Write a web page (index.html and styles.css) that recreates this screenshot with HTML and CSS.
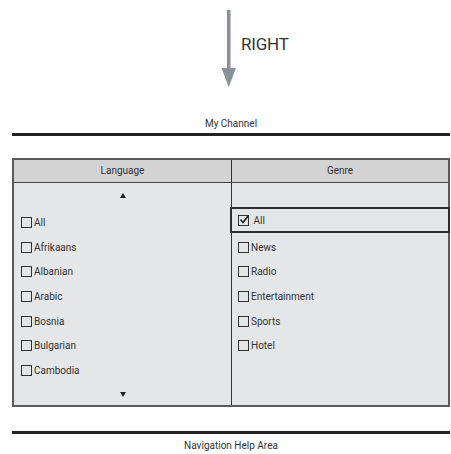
FILE: index.html
```html
<!DOCTYPE html>
<html>
<head>
<meta charset="utf-8">
<link rel="stylesheet" href="styles.css">
</head>
<body>
<div class="top">
  <svg class="arrow" width="16" height="90" viewBox="0 0 16 90">
    <rect x="6" y="10" width="3.5" height="60" fill="#8b909b"/>
    <polygon points="0.5,68 15,68 7.75,87" fill="#8b909b"/>
  </svg>
  <span class="dir">RIGHT</span>
</div>
<div class="wrap">
  <div class="title">My Channel</div>
  <div class="rule"></div>
  <div class="table">
    <div class="head">Language</div>
    <div class="head right">Genre</div>
    <div class="col">
      <div class="row center"><svg width="6" height="5" viewBox="0 0 6 5"><polygon points="3,0 6,5 0,5" fill="#222"/></svg></div>
      <div class="row"><span class="cb"></span>All</div>
      <div class="row"><span class="cb"></span>Afrikaans</div>
      <div class="row"><span class="cb"></span>Albanian</div>
      <div class="row"><span class="cb"></span>Arabic</div>
      <div class="row"><span class="cb"></span>Bosnia</div>
      <div class="row"><span class="cb"></span>Bulgarian</div>
      <div class="row"><span class="cb"></span>Cambodia</div>
      <div class="row center down"><svg width="6" height="5" viewBox="0 0 6 5"><polygon points="0,0 6,0 3,5" fill="#222"/></svg></div>
    </div>
    <div class="col right">
      <div class="row"></div>
      <div class="row sel"><span class="cb checked"><svg width="10" height="10" viewBox="0 0 10 10"><polyline points="1.5,4.5 4,7.5 9.5,0.5" fill="none" stroke="#222" stroke-width="1.6"/></svg></span>All</div>
      <div class="row"><span class="cb"></span>News</div>
      <div class="row"><span class="cb"></span>Radio</div>
      <div class="row"><span class="cb"></span>Entertainment</div>
      <div class="row"><span class="cb"></span>Sports</div>
      <div class="row"><span class="cb"></span>Hotel</div>
      <div class="row"></div>
      <div class="row"></div>
    </div>
  </div>
  <div class="rule bottom"></div>
  <div class="title foot">Navigation Help Area</div>
</div>
</body>
</html>
```

FILE: styles.css
```css
html, body {
  margin: 0;
  padding: 0;
  background: #fff;
  font-family: Roboto, "Noto Sans", sans-serif;
  color: #333;
}
.top {
  height: 114px;
  display: flex;
  align-items: flex-start;
  padding-left: 221px;
  box-sizing: border-box;
}
.arrow {
  display: block;
  flex: none;
}
.dir {
  margin-left: 4px;
  margin-top: 34px;
  font-size: 17px;
  line-height: 20px;
  color: #333;
  letter-spacing: -0.2px;
}
.wrap {
  margin-left: 12px;
  width: 438px;
}
.title {
  text-align: center;
  font-size: 10px;
  line-height: 14px;
  color: #333;
  margin-top: 3px;
}
.title.foot {
  margin-top: 5px;
}
.rule {
  height: 3px;
  background: #222;
  margin-top: 2px;
}
.rule.bottom {
  margin-top: 24px;
}
.table {
  margin-top: 22px;
  display: grid;
  grid-template-columns: 1fr 1fr;
  grid-template-rows: 23px 222px;
  border: 2px solid #5a5a5a;
  background: #e5e6e8;
}
.head {
  background: #d3d3d3;
  border-bottom: 1.5px solid #444;
  font-size: 10px;
  line-height: 22px;
  text-align: center;
  color: #333;
}
.right {
  border-left: 1.5px solid #333;
}
.col {
  display: grid;
  grid-template-rows: repeat(9, 1fr);
  height: 222px;
}
.row {
  display: flex;
  align-items: center;
  padding-left: 7px;
  padding-top: 5px;
  font-size: 10px;
  color: #333;
}
.col.right .row {
  padding-left: 6px;
}
.row.center {
  justify-content: center;
  padding-left: 0;
  padding-top: 0;
}
.row.center.down {
  padding-top: 4px;
}
.cb {
  width: 9px;
  height: 9px;
  border: 1.2px solid #333;
  margin-right: 2px;
  flex: none;
  position: relative;
}
.cb.checked svg {
  position: absolute;
  left: 0;
  top: -1px;
}
.cb.checked {
  margin-right: 5px;
}
.row.sel {
  border: 2px solid #2e2e2e;
  margin-left: -2.5px;
  margin-right: -2px;
  padding-left: 7px;
  padding-top: 1px;
  margin-top: -1px;
  margin-bottom: -1px;
}
```
